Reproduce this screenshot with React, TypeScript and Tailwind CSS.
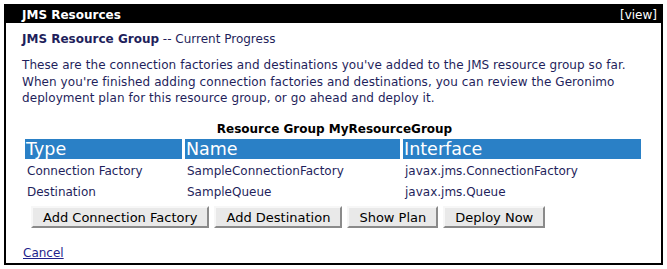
import React from 'react';

const rows = [
  { type: 'Connection Factory', name: 'SampleConnectionFactory', iface: 'javax.jms.ConnectionFactory' },
  { type: 'Destination', name: 'SampleQueue', iface: 'javax.jms.Queue' },
];

const buttons = ['Add Connection Factory', 'Add Destination', 'Show Plan', 'Deploy Now'];

export default function App() {
  return (
    <div className="p-[4px] bg-white font-['DejaVu_Sans',sans-serif] text-[12px] text-[#1f1f5c]">
      <div className="w-[659px] h-[261px] border-2 border-black">
        <div className="flex items-center justify-between h-[17px] bg-black text-white pl-[16px] pr-[4px]">
          <span className="font-bold text-[12px]">JMS Resources</span>
          <span className="text-[12px]">[view]</span>
        </div>

        <div className="pl-[16px] pr-[16px]">
          <p className="mt-[8px] text-[12px] leading-[16px]">
            <b>JMS Resource Group</b> -- Current Progress
          </p>

          <p className="mt-[10px] text-[12px] leading-[16.5px] tracking-[0.07px]">
            These are the connection factories and destinations you've added to the JMS resource group so far.
            When you're finished adding connection factories and destinations, you can review the Geronimo
            deployment plan for this resource group, or go ahead and deploy it.
          </p>

          <div className="ml-[3px] mt-[14px] w-[619px]">
            <div className="text-center font-bold text-black leading-[16px]">Resource Group MyResourceGroup</div>
            <table className="border-separate border-spacing-x-[3px] border-spacing-y-[2px] -ml-[3px] w-[622px]">
              <thead>
                <tr className="text-white text-[17.5px] leading-[20px]">
                  <th className="bg-[#2a80c6] font-normal text-left pl-[1px] w-[157px]">Type</th>
                  <th className="bg-[#2a80c6] font-normal text-left pl-[1px] w-[215px]">Name</th>
                  <th className="bg-[#2a80c6] font-normal text-left pl-[1px]">Interface</th>
                </tr>
              </thead>
              <tbody>
                {rows.map((r) => (
                  <tr key={r.name} className="leading-[17px]">
                    <td className="pl-[2px] pt-[2px]">{r.type}</td>
                    <td className="pl-[2px] pt-[2px]">{r.name}</td>
                    <td className="pl-[2px] pt-[2px]">{r.iface}</td>
                  </tr>
                ))}
              </tbody>
            </table>
          </div>

          <div className="flex gap-[5px] ml-[9px] mt-[3px]">
            {buttons.map((b) => (
              <button
                key={b}
                className="h-[22px] px-[10px] bg-[#e9e9e9] text-black text-[13px] border-2 border-t-[#f7f7f7] border-l-[#f7f7f7] border-r-[#8a8a8a] border-b-[#8a8a8a]"
              >
                {b}
              </button>
            ))}
          </div>

          <div className="mt-[16px] ml-[1px]">
            <a href="#" className="underline text-[#1f1f8c]">Cancel</a>
          </div>
        </div>
      </div>
    </div>
  );
}
